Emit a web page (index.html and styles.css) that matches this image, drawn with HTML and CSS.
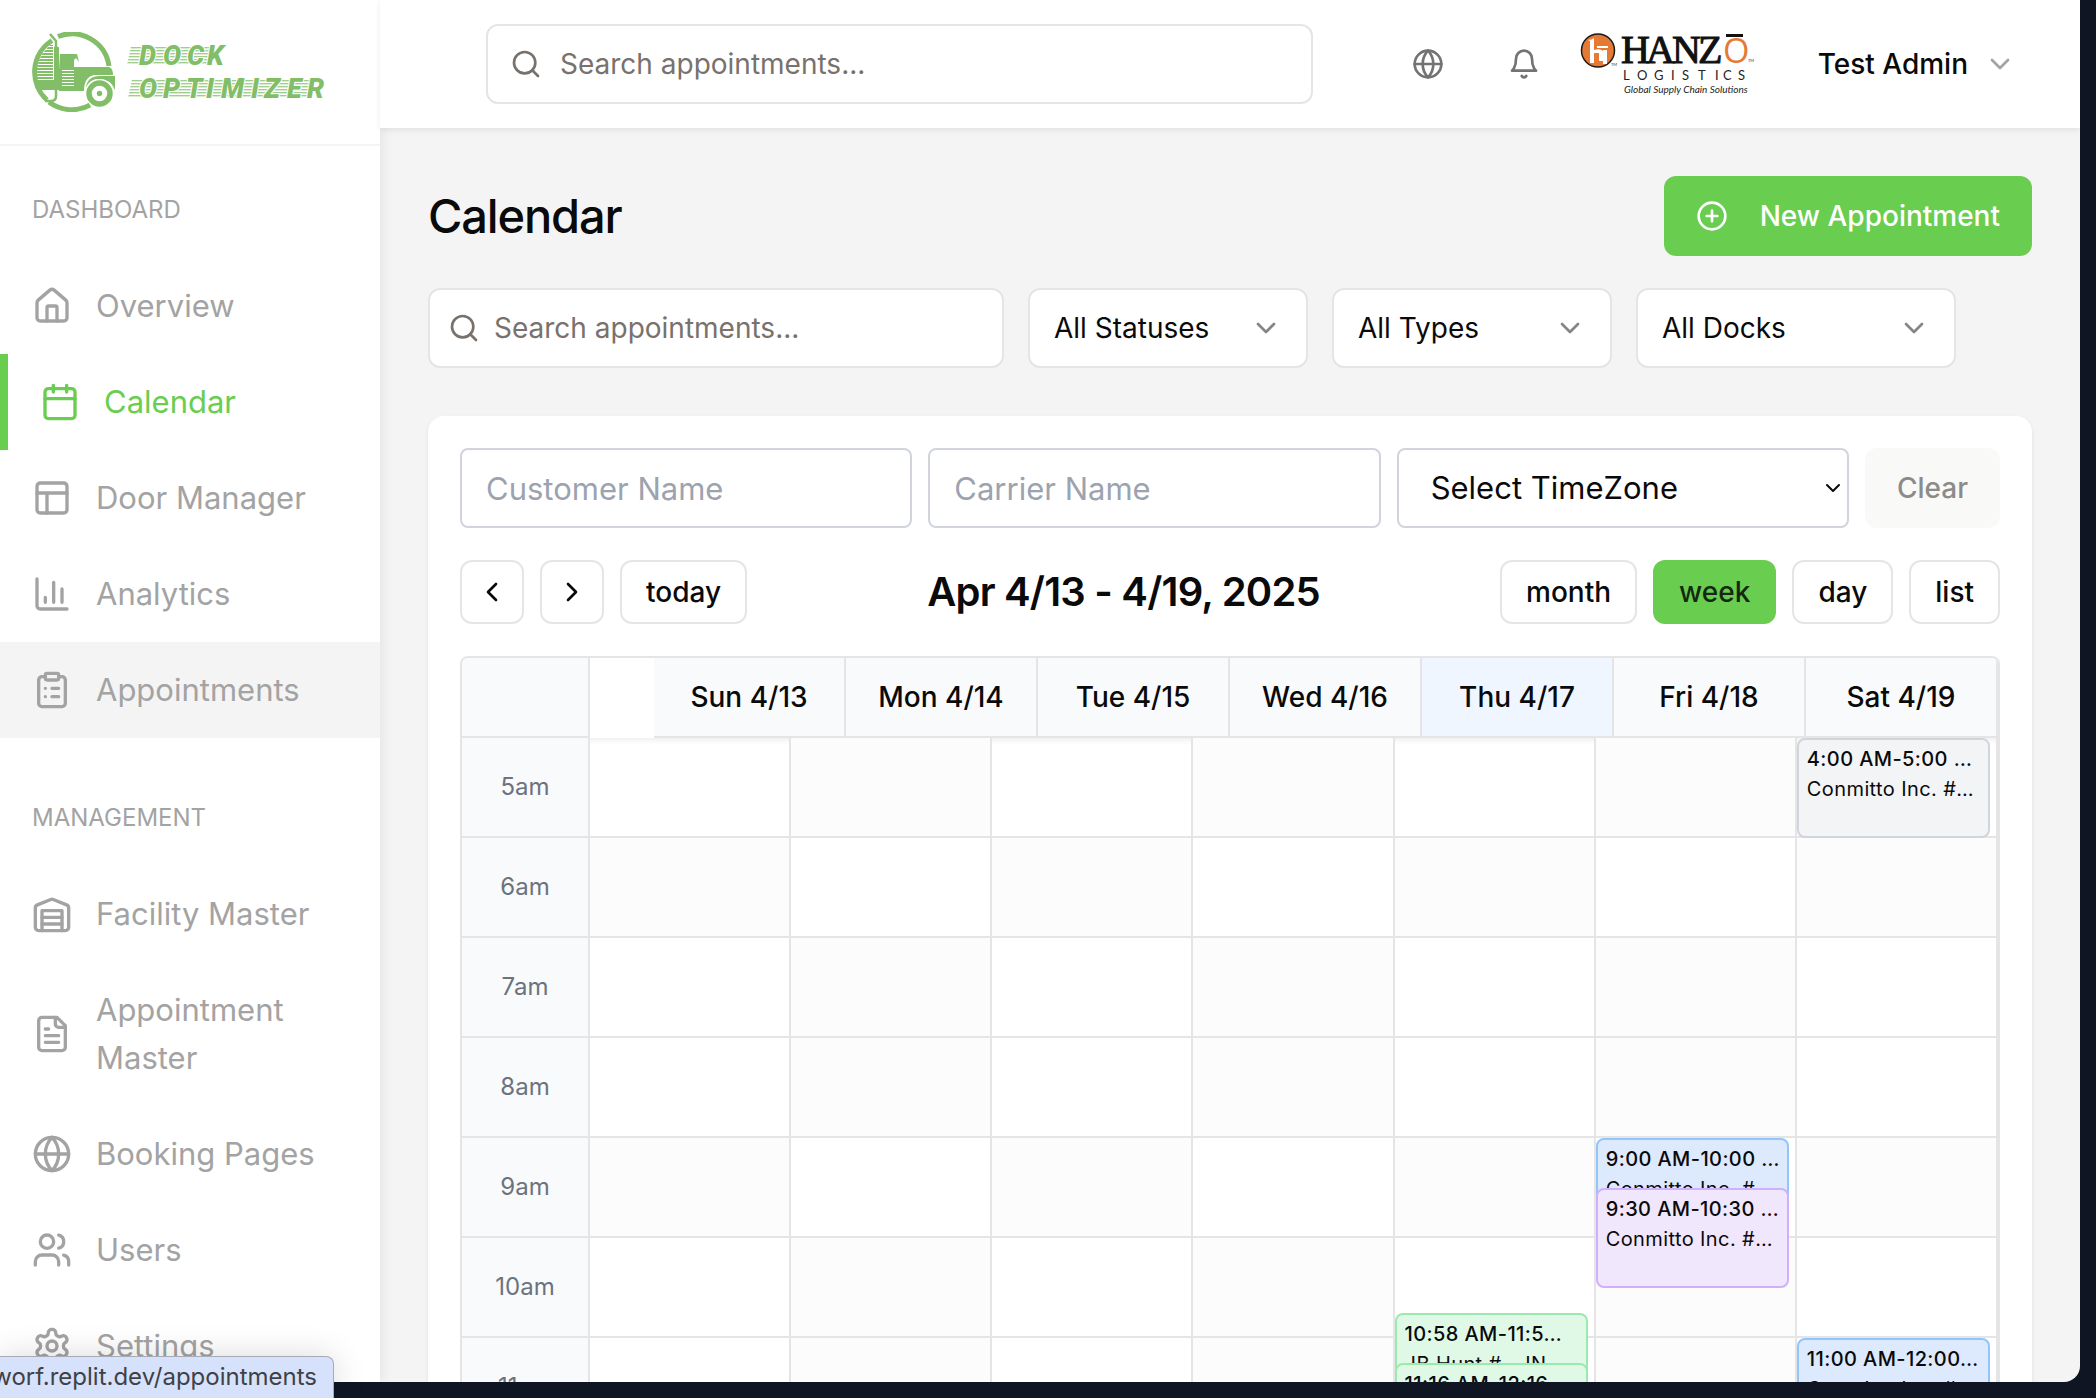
FILE: index.html
```html
<!DOCTYPE html>
<html lang="en">
<head>
<meta charset="utf-8">
<meta name="viewport" content="width=device-width, initial-scale=1">
<title>Calendar - Dock Optimizer</title>
<link rel="stylesheet" href="styles.css">
</head>
<body>
<svg class="sprite" aria-hidden="true">
  <symbol id="i-search" viewBox="0 0 24 24"><circle cx="11" cy="11" r="8"/><path d="m21 21-4.3-4.3"/></symbol>
  <symbol id="i-down" viewBox="0 0 24 24"><path d="m6 9 6 6 6-6"/></symbol>
  <symbol id="i-left" viewBox="0 0 24 24"><path d="m15 18-6-6 6-6"/></symbol>
  <symbol id="i-right" viewBox="0 0 24 24"><path d="m9 18 6-6-6-6"/></symbol>
  <symbol id="i-globe" viewBox="0 0 24 24"><circle cx="12" cy="12" r="10"/><path d="M12 2a14.5 14.5 0 0 0 0 20 14.5 14.5 0 0 0 0-20"/><path d="M2 12h20"/></symbol>
  <symbol id="i-bell" viewBox="0 0 24 24"><path d="M6 8a6 6 0 0 1 12 0c0 7 3 9 3 9H3s3-2 3-9"/><path d="M10.3 21a1.94 1.94 0 0 0 3.4 0"/></symbol>
  <symbol id="i-plus" viewBox="0 0 24 24"><circle cx="12" cy="12" r="10"/><path d="M8 12h8M12 8v8"/></symbol>
  <symbol id="i-house" viewBox="0 0 24 24"><path d="M15 21v-8a1 1 0 0 0-1-1h-4a1 1 0 0 0-1 1v8"/><path d="M3 10a2 2 0 0 1 .709-1.528l7-5.999a2 2 0 0 1 2.582 0l7 5.999A2 2 0 0 1 21 10v9a2 2 0 0 1-2 2H5a2 2 0 0 1-2-2z"/></symbol>
  <symbol id="i-calendar" viewBox="0 0 24 24"><path d="M8 2v4M16 2v4"/><rect width="18" height="18" x="3" y="4" rx="2"/><path d="M3 10h18"/></symbol>
  <symbol id="i-layout" viewBox="0 0 24 24"><rect width="18" height="18" x="3" y="3" rx="2"/><path d="M3 9h18M9 21V9"/></symbol>
  <symbol id="i-chart" viewBox="0 0 24 24"><path d="M3 3v16a2 2 0 0 0 2 2h16"/><path d="M18 17V9M13 17V5M8 17v-3"/></symbol>
  <symbol id="i-clipboard" viewBox="0 0 24 24"><rect width="8" height="4" x="8" y="2" rx="1"/><path d="M16 4h2a2 2 0 0 1 2 2v14a2 2 0 0 1-2 2H6a2 2 0 0 1-2-2V6a2 2 0 0 1 2-2h2"/><path d="M12 11h4M12 16h4M8 11h.01M8 16h.01"/></symbol>
  <symbol id="i-warehouse" viewBox="0 0 24 24"><path d="M22 8.35V20a2 2 0 0 1-2 2H4a2 2 0 0 1-2-2V8.35A2 2 0 0 1 3.26 6.5l8-3.2a2 2 0 0 1 1.48 0l8 3.2A2 2 0 0 1 22 8.35Z"/><path d="M6 18h12M6 14h12"/><path d="M6 22V10h12v12"/></symbol>
  <symbol id="i-file" viewBox="0 0 24 24"><path d="M15 2H6a2 2 0 0 0-2 2v16a2 2 0 0 0 2 2h12a2 2 0 0 0 2-2V7Z"/><path d="M14 2v4a2 2 0 0 0 2 2h4M10 9H8M16 13H8M16 17H8"/></symbol>
  <symbol id="i-users" viewBox="0 0 24 24"><path d="M16 21v-2a4 4 0 0 0-4-4H6a4 4 0 0 0-4 4v2"/><circle cx="9" cy="7" r="4"/><path d="M22 21v-2a4 4 0 0 0-3-3.87M16 3.13a4 4 0 0 1 0 7.75"/></symbol>
  <symbol id="i-settings" viewBox="0 0 24 24"><path d="M12.22 2h-.44a2 2 0 0 0-2 2v.18a2 2 0 0 1-1 1.73l-.43.25a2 2 0 0 1-2 0l-.15-.08a2 2 0 0 0-2.73.73l-.22.38a2 2 0 0 0 .73 2.73l.15.1a2 2 0 0 1 1 1.72v.51a2 2 0 0 1-1 1.74l-.15.09a2 2 0 0 0-.73 2.73l.22.38a2 2 0 0 0 2.73.73l.15-.08a2 2 0 0 1 2 0l.43.25a2 2 0 0 1 1 1.73V20a2 2 0 0 0 2 2h.44a2 2 0 0 0 2-2v-.18a2 2 0 0 1 1-1.73l.43-.25a2 2 0 0 1 2 0l.15.08a2 2 0 0 0 2.73-.73l.22-.39a2 2 0 0 0-.73-2.73l-.15-.08a2 2 0 0 1-1-1.74v-.5a2 2 0 0 1 1-1.74l.15-.09a2 2 0 0 0 .73-2.73l-.22-.38a2 2 0 0 0-2.73-.73l-.15.08a2 2 0 0 1-2 0l-.43-.25a2 2 0 0 1-1-1.73V4a2 2 0 0 0-2-2z"/><circle cx="12" cy="12" r="3"/></symbol>
</svg>

<div class="window">
  <aside class="sidebar">
    <a class="brand" href="#" aria-label="Dock Optimizer">
      <svg class="brand-logo" viewBox="0 0 296 80">
        <defs>
          <pattern id="streaks" width="40" height="3" patternUnits="userSpaceOnUse"><rect width="40" height="1.4" fill="#82be67"/></pattern>
          <pattern id="slats" width="20" height="3" patternUnits="userSpaceOnUse"><rect width="20" height="2" fill="#82be67"/></pattern>
        </defs>
        <g fill="none" stroke="#82be67">
          <path d="M26 4.500A37.500 37.500 0 0 1 77 34" stroke-width="5"/>
          <path d="M20 8.500A37.500 37.500 0 0 0 15 68" stroke-width="5"/>
          <path d="M17 70A37.500 37.500 0 0 0 58 73" stroke-width="5"/>
          <path d="M18 2l6 7v7" stroke-width="2.500"/>
          <path d="M24 14v50q0 5-5 5h-6" stroke-width="2.500"/>
          <path d="M24.500 15v42" stroke-width="5"/>
        </g>
        <path d="M10 22l8-9h3v36H5q-2-15 5-27z" fill="url(#slats)"/>
        <g fill="#82be67">
          <path d="M4 48h24v10H9z"/>
          <path d="M28 22h17l2 8-3-4-2 2v7h35q4 1 4 8H62q-10 2-10 16H27V38z"/>
          <path d="M54 56q1-12 14-12h15v14q-4-11-16-11-10 0-13 9z"/>
        </g>
        <rect x="30" y="38" width="12" height="16" fill="#fff"/>
        <rect x="30" y="38" width="12" height="16" fill="url(#slats)"/>
        <circle cx="67.500" cy="61.500" r="14.500" fill="#fff"/>
        <circle cx="67.500" cy="61.500" r="10.500" fill="none" stroke="#82be67" stroke-width="5.500"/>
        <circle cx="67.500" cy="61.500" r="2.700" fill="#82be67"/>
        <path d="M99 14h80l-3 19H95z" fill="url(#streaks)" opacity=".75"/>
        <path d="M100 47h180l-3 19H96z" fill="url(#streaks)" opacity=".75"/>
        <g class="brand-word">
          <text x="107 131 155 175" y="33">DOCK</text>
          <text x="107 131 154 174 189 219 232 255 275" y="66">OPTIMIZER</text>
        </g>
      </svg>
    </a>
    <nav>
      <h2 class="nav-title">DASHBOARD</h2>
      <ul class="nav-list">
        <li><a class="nav-item" href="#"><svg class="icon nav-icon"><use href="#i-house"/></svg>Overview</a></li>
        <li><a class="nav-item active" href="#" aria-current="page"><svg class="icon nav-icon"><use href="#i-calendar"/></svg>Calendar</a></li>
        <li><a class="nav-item" href="#"><svg class="icon nav-icon"><use href="#i-layout"/></svg>Door Manager</a></li>
        <li><a class="nav-item" href="#"><svg class="icon nav-icon"><use href="#i-chart"/></svg>Analytics</a></li>
        <li><a class="nav-item hovered" href="#"><svg class="icon nav-icon"><use href="#i-clipboard"/></svg>Appointments</a></li>
      </ul>
      <h2 class="nav-title">MANAGEMENT</h2>
      <ul class="nav-list">
        <li><a class="nav-item" href="#"><svg class="icon nav-icon"><use href="#i-warehouse"/></svg>Facility Master</a></li>
        <li><a class="nav-item" href="#"><svg class="icon nav-icon"><use href="#i-file"/></svg>Appointment Master</a></li>
        <li><a class="nav-item" href="#"><svg class="icon nav-icon"><use href="#i-globe"/></svg>Booking Pages</a></li>
        <li><a class="nav-item" href="#"><svg class="icon nav-icon"><use href="#i-users"/></svg>Users</a></li>
        <li><a class="nav-item" href="#"><svg class="icon nav-icon"><use href="#i-settings"/></svg>Settings</a></li>
      </ul>
    </nav>
  </aside>

  <div class="page">
    <header class="topbar">
      <label class="search">
        <svg class="icon"><use href="#i-search"/></svg>
        <input type="search" placeholder="Search appointments..." aria-label="Search appointments">
      </label>
      <div class="top-actions">
        <button class="icon-button" aria-label="Language"><svg class="icon"><use href="#i-globe"/></svg></button>
        <button class="icon-button" aria-label="Notifications"><svg class="icon"><use href="#i-bell"/></svg></button>
        <svg class="org-logo" viewBox="0 0 174 64" role="img" aria-label="Hanzo Logistics">
          <circle cx="18" cy="18.500" r="16.500" fill="#e57a35" stroke="#1a1a1a" stroke-width="1.500"/>
          <path d="M8 8q4 0 6-2v12q6-2 9 1v10h-4V21h-5v10h-4V9z" fill="#fff"/>
          <path d="M17 14h11v2H17zM23 18h4v14h-4z" fill="#fff"/>
          <text class="org-name" x="41 66 92 118" y="31">HANZ</text>
          <text class="org-o" x="143" y="31">O</text>
          <path d="M146 2h17v3h-17z" fill="#111"/>
          <text class="org-tm" x="31" y="34">TM</text>
          <text class="org-tm" x="168" y="30">TM</text>
          <text class="org-sub" x="43 57 74 91 102 118 135 143 158" y="48">LOGISTICS</text>
          <text class="org-tag" x="44" y="61">Global Supply Chain Solutions</text>
        </svg>
        <button class="user">Test Admin<svg class="icon"><use href="#i-down"/></svg></button>
      </div>
    </header>

    <main class="content">
      <div class="title-row">
        <h1>Calendar</h1>
        <button class="primary"><svg class="icon"><use href="#i-plus"/></svg>New Appointment</button>
      </div>
      <div class="filters">
        <label class="search filter-search">
          <svg class="icon"><use href="#i-search"/></svg>
          <input type="search" placeholder="Search appointments..." aria-label="Filter appointments">
        </label>
        <div class="picker"><select aria-label="Status"><option>All Statuses</option></select><svg class="icon"><use href="#i-down"/></svg></div>
        <div class="picker"><select aria-label="Type"><option>All Types</option></select><svg class="icon"><use href="#i-down"/></svg></div>
        <div class="picker picker-wide"><select aria-label="Dock"><option>All Docks</option></select><svg class="icon"><use href="#i-down"/></svg></div>
      </div>

      <section class="panel">
        <div class="fields">
          <input class="field" type="text" placeholder="Customer Name" aria-label="Customer Name">
          <input class="field" type="text" placeholder="Carrier Name" aria-label="Carrier Name">
          <div class="zone"><select class="field" aria-label="Time zone"><option>Select TimeZone</option></select><svg class="icon"><use href="#i-down"/></svg></div>
          <button class="clear">Clear</button>
        </div>
        <div class="toolbar">
          <div class="group">
            <button class="tool square" aria-label="Previous week"><svg class="icon"><use href="#i-left"/></svg></button>
            <button class="tool square" aria-label="Next week"><svg class="icon"><use href="#i-right"/></svg></button>
            <button class="tool">today</button>
          </div>
          <h2 class="range">Apr 4/13 - 4/19, 2025</h2>
          <div class="group">
            <button class="tool">month</button>
            <button class="tool selected">week</button>
            <button class="tool">day</button>
            <button class="tool">list</button>
          </div>
        </div>

        <div class="calendar">
          <table class="days">
            <thead>
              <tr><td class="corner"></td><td class="gutter"></td><th>Sun 4/13</th><th>Mon 4/14</th><th>Tue 4/15</th><th>Wed 4/16</th><th class="today">Thu 4/17</th><th>Fri 4/18</th><th>Sat 4/19</th></tr>
            </thead>
          </table>
          <div class="week">
            <table class="hours">
              <tbody>
                <tr><th>5am</th><td></td><td></td><td></td><td></td><td></td><td></td><td></td></tr>
                <tr><th>6am</th><td></td><td></td><td></td><td></td><td></td><td></td><td></td></tr>
                <tr><th>7am</th><td></td><td></td><td></td><td></td><td></td><td></td><td></td></tr>
                <tr><th>8am</th><td></td><td></td><td></td><td></td><td></td><td></td><td></td></tr>
                <tr><th>9am</th><td></td><td></td><td></td><td></td><td></td><td></td><td></td></tr>
                <tr><th>10am</th><td></td><td></td><td></td><td></td><td></td><td></td><td></td></tr>
                <tr><th>11am</th><td></td><td></td><td></td><td></td><td></td><td></td><td></td></tr>
              </tbody>
            </table>
            <div class="events">
              <div class="day thu">
                <article class="event green" style="top:575px"><b>10:58 AM-11:5…</b><span>JB Hunt #… IN…</span></article>
                <article class="event green" style="top:625px"><b>11:16 AM-12:16…</b></article>
              </div>
              <div class="day fri">
                <article class="event blue" style="top:400px"><b>9:00 AM-10:00 …</b><span>Conmitto Inc. #…</span></article>
                <article class="event purple" style="top:450px"><b>9:30 AM-10:30 …</b><span>Conmitto Inc. #…</span></article>
              </div>
              <div class="day sat">
                <article class="event gray" style="top:0"><b>4:00 AM-5:00 …</b><span>Conmitto Inc. #…</span></article>
                <article class="event blue" style="top:600px"><b>11:00 AM-12:00…</b><span>Conmitto Inc. #…</span></article>
              </div>
            </div>
          </div>
        </div>
      </section>
    </main>
  </div>
</div>
<div class="link-status">worf.replit.dev/appointments</div>
</body>
</html>
```
FILE: styles.css
```css
* { box-sizing: border-box; }

body {
  margin: 0;
  height: 100vh;
  padding: 0 16px 16px 0;
  overflow: hidden;
  background: #0f1523;
  color: #0a0a0a;
  font: 28px/40px Inter, "Liberation Sans", sans-serif;
}

h1, h2, ul { margin: 0; padding: 0; }
ul { list-style: none; }
button, input, select { font: inherit; color: inherit; }
button { border: 0; background: none; padding: 0; }
a { color: inherit; text-decoration: none; }

.sprite { position: absolute; width: 0; height: 0; }

.icon {
  width: 32px;
  height: 32px;
  flex: none;
  fill: none;
  stroke: currentColor;
  stroke-width: 2;
  stroke-linecap: round;
  stroke-linejoin: round;
}

.window {
  display: flex;
  height: 100%;
  overflow: hidden;
  background: #f4f4f4;
  border-radius: 0 0 16px 0;
}

/* Sidebar */
.sidebar {
  width: 380px;
  flex: none;
  background: #fff;
  box-shadow: 2px 0 12px rgba(0, 0, 0, .07);
  color: #a3a3a3;
}
.brand {
  display: block;
  padding: 32px;
  border-bottom: 2px solid #f4f4f4;
}
.brand-logo { display: block; width: 296px; height: 80px; }
.brand-word {
  fill: #82be67;
  stroke: #fff;
  stroke-width: 2px;
  paint-order: stroke;
  font: italic 900 27px Roboto, sans-serif;
}
.nav-title {
  padding: 0 32px;
  margin: 48px 0 32px;
  font-size: 24px;
  line-height: 32px;
  font-weight: 400;
}
.nav-list + .nav-title { margin-top: 64px; }
.nav-item {
  display: flex;
  align-items: center;
  gap: 24px;
  padding: 24px 32px;
  font-size: 31px;
  line-height: 48px;
}
.nav-icon { width: 40px; height: 40px; }
.nav-item.active { border-left: 8px solid #69cd50; color: #69cd50; }
.nav-item.hovered { background: #f4f4f4; }

/* Top bar */
.page { flex: 1; min-width: 0; }
.topbar {
  display: flex;
  align-items: center;
  height: 128px;
  padding: 0 64px 0 106px;
  gap: 99px;
  background: #fff;
  box-shadow: 0 2px 6px rgba(0, 0, 0, .08);
}
.search {
  display: flex;
  align-items: center;
  flex: 1;
  gap: 18px;
  height: 80px;
  padding: 0 22px;
  border: 2px solid #e5e5e5;
  border-radius: 12px;
  background: #fff;
  color: #78716c;
}
.search input {
  flex: 1;
  min-width: 0;
  border: 0;
  padding: 0;
  outline: 0;
  background: none;
}
.search input::placeholder { color: #78716c; opacity: 1; }
.top-actions { display: flex; align-items: center; }
.icon-button { display: flex; margin-right: 64px; color: #737373; }
.icon-button + .icon-button { margin-right: 40px; }
.org-logo { width: 174px; height: 64px; margin-right: 64px; overflow: visible; }
.org-name { font: 400 40px "Liberation Serif", serif; fill: #111; stroke: #111; stroke-width: 1px; }
.org-o { font: 34px "Open Sans", sans-serif; fill: #e57a35; }
.org-tm { font: 4px Lato, sans-serif; fill: #333; }
.org-sub { font: 13px Lato, sans-serif; fill: #222; }
.org-tag { font: italic 10px Lato, sans-serif; fill: #222; }
.user { display: flex; align-items: center; gap: 16px; font-weight: 450; }
.user .icon { color: #a3a3a3; }

/* Page content */
.content { padding: 48px; }
.title-row { display: flex; align-items: center; justify-content: space-between; }
h1 { font-size: 47px; line-height: 64px; font-weight: 500; letter-spacing: -.025em; }
.primary {
  display: flex;
  align-items: center;
  gap: 32px;
  height: 80px;
  padding: 0 32px;
  border-radius: 12px;
  background: #69cd50;
  color: #fff;
  font-weight: 450;
}
.filters {
  display: flex;
  gap: 24px;
  margin: 32px 76px 48px 0;
}
.filter-search { padding: 0 18px; gap: 14px; }
.picker { position: relative; width: 280px; }
.picker-wide { width: 320px; }
.picker select {
  appearance: none;
  width: 100%;
  height: 80px;
  padding: 0 24px;
  border: 2px solid #e5e5e5;
  border-radius: 12px;
  background: #fff;
}
.picker .icon {
  position: absolute;
  top: 24px;
  right: 26px;
  color: #858585;
  pointer-events: none;
}
.panel {
  padding: 32px;
  border-radius: 16px;
  background: #fff;
  box-shadow: 0 2px 4px rgba(0, 0, 0, .08);
}
.fields {
  display: grid;
  grid-template-columns: repeat(3, minmax(0, 1fr)) auto;
  gap: 16px;
}
.field {
  width: 100%;
  height: 80px;
  padding: 0 24px;
  border: 2px solid #d1d5db;
  border-radius: 8px;
  background: #fff;
  font-size: 31px;
}
.field::placeholder { color: #9ca3af; opacity: 1; }
.zone { position: relative; }
.zone .field { appearance: none; padding: 0 32px; }
.zone .icon {
  position: absolute;
  top: 28px;
  right: 4px;
  width: 24px;
  height: 24px;
}
.clear {
  height: 80px;
  padding: 0 32px;
  border-radius: 12px;
  background: #f9f9f8;
  color: #8b8b89;
  font-weight: 450;
}
.toolbar {
  display: flex;
  align-items: center;
  justify-content: space-between;
  margin: 32px 0;
}
.group { display: flex; gap: 16px; }
.tool {
  display: flex;
  align-items: center;
  justify-content: center;
  height: 64px;
  padding: 0 24px;
  border: 2px solid #e5e5e5;
  border-radius: 12px;
  font-weight: 450;
}
.square { width: 64px; padding: 0; }
.tool.selected { border-color: #69cd50; background: #69cd50; color: #14290f; }
.range { font-size: 40px; line-height: 56px; font-weight: 600; letter-spacing: -.02em; }

/* Week calendar */
.calendar {
  border: 2px solid #e5e5e5;
  border-radius: 8px 8px 0 0;
  overflow: hidden;
}
table {
  width: 100%;
  table-layout: fixed;
  border-collapse: separate;
  border-spacing: 0;
}
th, td {
  padding: 0;
  border-right: 2px solid #e5e5e5;
  border-bottom: 2px solid #e5e5e5;
}
.days { position: relative; box-shadow: 0 2px 6px rgba(0, 0, 0, .08); }
.days tr { height: 80px; }
.days th, .corner { background: #f9fafb; font-weight: 450; }
.corner, .hours th { width: 128px; }
.gutter { width: 64px; border-color: #fff; background: #fff; }
.days .today { background: #eff6ff; }
.week { position: relative; }
.hours tr { height: 100px; }
.hours th {
  background: #f9fafb;
  color: #6b7280;
  font-size: 24px;
  font-weight: 400;
}
.hours td:nth-child(odd) { background: #fcfcfc; }
.hours tr:nth-child(3n+2) td:nth-child(odd) { background: #fff; }
.hours tr:nth-child(3n+2) td:nth-child(even) { background: #fcfcfc; }
.events {
  position: absolute;
  inset: 0 0 0 128px;
  display: grid;
  grid-template-columns: repeat(7, 1fr);
}
.day { position: relative; grid-row: 1; }
.thu { grid-column: 5; }
.fri { grid-column: 6; }
.sat { grid-column: 7; }
.event {
  position: absolute;
  left: 0;
  right: 8px;
  height: 100px;
  padding: 4px 8px;
  overflow: hidden;
  border: 2px solid;
  border-radius: 8px;
  font-size: 20px;
  line-height: 30px;
  letter-spacing: .02em;
  white-space: nowrap;
}
.event b, .event span { display: block; }
.event b { font-weight: 450; }
.gray { background: #f3f4f6; border-color: #d1d5db; }
.blue { background: #dde9fc; border-color: #93c5fd; }
.purple { background: #f1e7fd; border-color: #d0b0fb; }
.green { background: #e0f9e7; border-color: #9aeaae; }

/* Browser link preview */
.link-status {
  position: absolute;
  left: 0;
  bottom: 0;
  display: flex;
  justify-content: flex-end;
  width: 334px;
  height: 42px;
  padding: 0 16px 0 0;
  overflow: hidden;
  border: solid #a8abb3;
  border-width: 1px 1px 0 0;
  border-radius: 0 8px 0 0;
  background: #d6e2fb;
  box-shadow: 0 0 32px rgba(0, 0, 0, .15);
  color: #3f4145;
  font-size: 24px;
  white-space: nowrap;
}
```
